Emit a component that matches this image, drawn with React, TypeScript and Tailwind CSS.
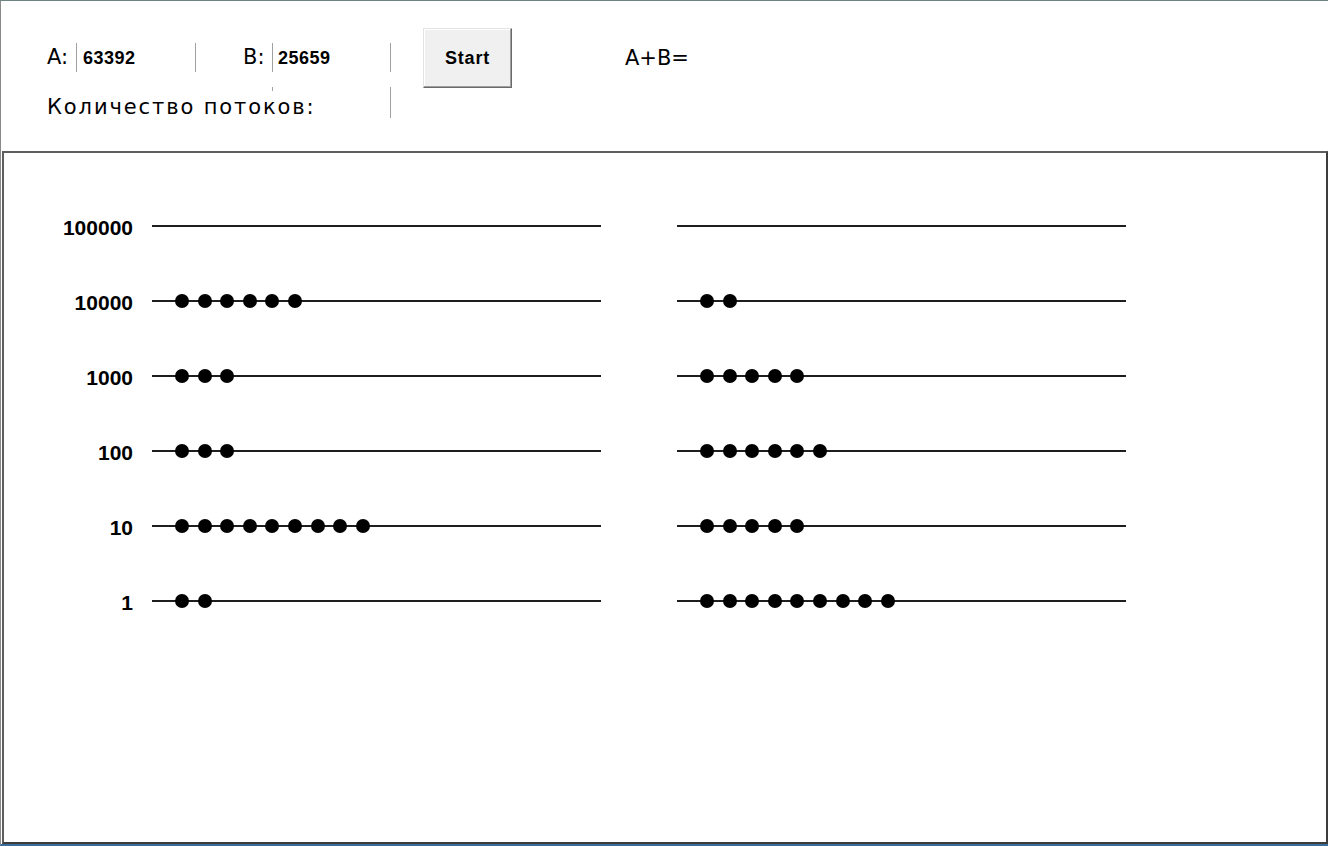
import React from "react";

const font = { fontFamily: '"Liberation Sans", Arial, sans-serif' };
const wide = { fontFamily: '"DejaVu Sans", "Liberation Sans", sans-serif' };

const rows: { label: string; a: number; b: number }[] = [
  { label: "100000", a: 0, b: 0 },
  { label: "10000", a: 6, b: 2 },
  { label: "1000", a: 3, b: 5 },
  { label: "100", a: 3, b: 6 },
  { label: "10", a: 9, b: 5 },
  { label: "1", a: 2, b: 9 },
];

function Rod({ count }: { count: number }) {
  return (
    <div className="relative w-[449px] h-[14px]">
      <div className="absolute left-0 right-0 top-[6px] h-[2px] bg-[#1e1e1e]" />
      <div className="absolute inset-0 flex items-center gap-[8.6px] pl-[23px]">
        {Array.from({ length: count }).map((_, i) => (
          <div key={i} className="w-[14px] h-[14px] rounded-full bg-black" />
        ))}
      </div>
    </div>
  );
}

function Field({ value, w, pl }: { value: string; w: string; pl: string }) {
  return (
    <div
      className={`${w} ${pl} h-[29px] mt-[15px] border-l border-r border-[#a0a0a0] pt-[5px] text-[18px] leading-[20px] font-bold tracking-[0.5px] text-black`}
    >
      {value}
    </div>
  );
}

export default function App() {
  return (
    <div
      style={font}
      className="w-[1328px] h-[846px] bg-white flex flex-col border-t border-t-[#6e8282] border-l border-l-[#8a8a8a] border-b-2 border-b-[#3a6d9c] overflow-hidden text-black"
    >
      {/* top controls */}
      <div className="h-[150px] shrink-0 pl-[46px] pt-[27px] flex flex-col">
        <div className="flex items-start h-[59px]">
          <div style={wide} className="w-[29px] mt-[17px] text-[21px] leading-[24px]">A:</div>
          <Field value="63392" w="w-[120px]" pl="pl-[6px]" />
          <div style={wide} className="w-[29px] ml-[47px] mt-[17px] text-[21px] leading-[24px]">B:</div>
          <Field value="25659" w="w-[119px]" pl="pl-[5px]" />
          <button className="ml-[32px] w-[89px] h-[60px] shrink-0 bg-[#f0f0f0] border border-t-[#e3e3e3] border-l-[#e3e3e3] border-r-[#696969] border-b-[#696969] shadow-[inset_-1px_-1px_0_#a0a0a0,inset_1px_1px_0_#ffffff] text-[18px] font-bold tracking-[0.8px] leading-[20px]">
            Start
          </button>
          <div style={wide} className="ml-[113px] mt-[18px] text-[21px] leading-[24px]">A+B=</div>
        </div>
        <div className="flex items-start">
          <div
            style={wide}
            className="relative z-10 w-[272px] mt-[4px] pt-[4px] bg-white text-[21px] leading-[24px] tracking-[1.9px] whitespace-nowrap"
          >
            Количество потоков:
          </div>
          <div className="relative z-0 ml-[-47px] w-[119px] h-[31px] border-l border-r border-[#a0a0a0]" />
        </div>
      </div>

      {/* abacus panel */}
      <div className="flex-1 ml-[1px] border-2 border-t-[#5e5e5e] border-l-[#5e5e5e] border-r-[#3c3c3c] border-b-[#3c3c3c] bg-white pt-[35px]">
        {rows.map((r) => (
          <div key={r.label} className="h-[75px] flex items-center">
            <div className="w-[129px] text-right text-[21px] leading-[24px] font-bold mt-[4px]">
              {r.label}
            </div>
            <div className="ml-[19px]">
              <Rod count={r.a} />
            </div>
            <div className="ml-[76px]">
              <Rod count={r.b} />
            </div>
          </div>
        ))}
      </div>
    </div>
  );
}
